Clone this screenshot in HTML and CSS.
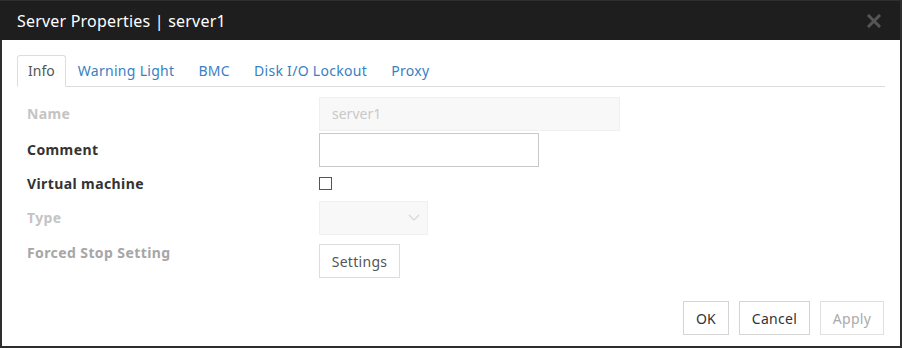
FILE: index.html
```html
<!DOCTYPE html>
<html>
<head>
<meta charset="utf-8">
<link rel="stylesheet" href="styles.css">
</head>
<body>
<div class="dialog">
  <div class="header">
    <span class="title">Server Properties | server1</span>
    <svg class="close" width="14" height="14" viewBox="0 0 14 14"><path d="M2 2 L12 12 M12 2 L2 12" stroke="#555" stroke-width="3" stroke-linecap="square"/></svg>
  </div>
  <div class="content">
    <ul class="tabs">
      <li class="tab active">Info</li>
      <li class="tab">Warning Light</li>
      <li class="tab">BMC</li>
      <li class="tab">Disk I/O Lockout</li>
      <li class="tab">Proxy</li>
    </ul>
    <div class="form">
      <div class="row r1">
        <label class="lbl disabled">Name</label>
        <div class="input name-input">server1</div>
      </div>
      <div class="row r2">
        <label class="lbl">Comment</label>
        <div class="input comment-input"></div>
      </div>
      <div class="row r3">
        <label class="lbl">Virtual machine</label>
        <span class="checkbox"></span>
      </div>
      <div class="row r4">
        <label class="lbl disabled">Type</label>
        <div class="select">
          <svg width="12" height="8" viewBox="0 0 12 8"><path d="M1 1 L6 6 L11 1" fill="none" stroke="#d6d6d6" stroke-width="1.2"/></svg>
        </div>
      </div>
      <div class="row r5">
        <label class="lbl disabled2">Forced Stop Setting</label>
        <button class="btn settings">Settings</button>
      </div>
    </div>
    <div class="footer">
      <button class="btn ok">OK</button>
      <button class="btn cancel">Cancel</button>
      <button class="btn apply">Apply</button>
    </div>
  </div>
</div>
</body>
</html>
```
FILE: styles.css
```css
html, body {
  margin: 0;
  padding: 0;
}
body {
  background: #2e2e2e;
  width: 902px;
  height: 348px;
  overflow: hidden;
  font-family: "Noto Sans", "Liberation Sans", sans-serif;
}
.dialog {
  width: 900px;
  margin-top: 1px;
}
.header {
  height: 39px;
  background: #1e1e1e;
  display: flex;
  align-items: center;
  justify-content: space-between;
  padding: 0 19px 0 17px;
}
.title {
  color: #fff;
  font-size: 16px;
  letter-spacing: 0.2px;
}
.content {
  margin-left: 2px;
  background: #fff;
  height: 306px;
  box-sizing: border-box;
  padding: 15px 15px 0 15px;
  display: flex;
  flex-direction: column;
}
.tabs {
  list-style: none;
  margin: 0;
  padding: 0;
  display: flex;
  border-bottom: 1px solid #ddd;
  height: 31px;
}
.tab {
  height: 31px;
  box-sizing: border-box;
  padding: 0 12px;
  line-height: 31px;
  font-size: 14px;
  letter-spacing: 0.3px;
  color: #3a7fc1;
}
.tab.active {
  color: #555;
  border: 1px solid #ddd;
  border-bottom: 1px solid #fff;
  height: 32px;
  line-height: 30px;
  padding: 0 10px;
  letter-spacing: 0;
  background: #fff;
  border-radius: 3px 3px 0 0;
  margin-right: 0;
}
.form {
  margin-top: 10px;
  padding-left: 10px;
}
.row {
  display: flex;
  align-items: center;
  height: 34px;
}
.r2 { margin-top: 2px; }
.r5 { margin-top: 9px; align-items: flex-start; }
.lbl {
  width: 292px;
  font-size: 14px;
  letter-spacing: 0.4px;
  font-weight: bold;
  color: #333;
  margin-top: -2px;
}
.lbl.disabled { color: #c4c4c4; }
.lbl.disabled2 { color: #a6a6a6; line-height: 18px; margin-top: 0; }
.input {
  box-sizing: border-box;
  height: 34px;
  border: 1px solid #ccc;
  font-size: 14px;
  padding: 0 12px;
  line-height: 32px;
}
.name-input {
  width: 301px;
  background: #f8f8f8;
  border-color: #f0f0f0;
  color: #c8c8c8;
}
.comment-input {
  width: 220px;
  border-color: #c8c8c8;
}
.checkbox {
  width: 11px;
  height: 11px;
  border: 1px solid #555;
  background: #fff;
  margin-top: -2px;
}
.select {
  box-sizing: border-box;
  width: 109px;
  height: 34px;
  background: #f8f8f8;
  border: 1px solid #f0f0f0;
  display: flex;
  align-items: center;
  justify-content: flex-end;
  padding-right: 7px;
}
.btn {
  box-sizing: border-box;
  height: 34px;
  background: #fff;
  border: 1px solid #d4d4d4;
  font-family: "Noto Sans", "Liberation Sans", sans-serif;
  font-size: 14px;
  letter-spacing: 0.3px;
  color: #444;
  padding: 0;
  margin: 0;
}
.settings {
  width: 81px;
  color: #555;
  border-color: #ddd;
}
.footer {
  margin-top: auto;
  margin-bottom: 11px;
  display: flex;
  justify-content: flex-end;
  gap: 10px;
  padding-right: 1px;
}
.ok { width: 46px; color: #333; }
.cancel { width: 71px; color: #333; }
.apply { width: 64px; color: #aaa; border-color: #e0e0e0; }
```
